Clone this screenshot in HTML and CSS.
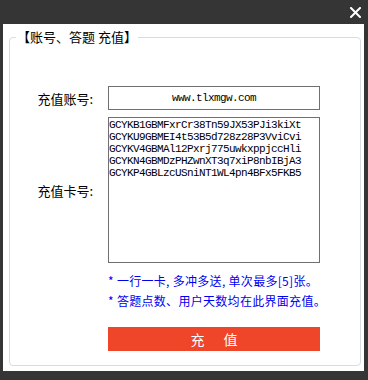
FILE: index.html
```html
<!DOCTYPE html>
<html lang="zh-CN">
<head>
    <meta charset="UTF-8">
    <meta name="viewport" content="width=device-width, initial-scale=1.0">
    <title>充值</title>
    <link rel="stylesheet" href="styles.css">
</head>
<body>

    <div class="titlebar">
        <svg class="close" width="11" height="11" viewBox="0 0 11 11">
            <path d="M1 1 L10 10 M10 1 L1 10" stroke="#fff" stroke-width="2" stroke-linecap="square"/>
        </svg>
    </div>

    <div class="panel">
        <fieldset class="group">
            <legend>【账号、答题 充值】</legend>

            <div class="form-grid">
                <label for="account">充值账号:</label>
                <input type="text" id="account" value="www.tlxmgw.com">

                <label for="cards">充值卡号:</label>
                <textarea id="cards">GCYKB1GBMFxrCr38Tn59JX53PJi3kiXt
GCYKU9GBMEI4t53B5d728z28P3VviCvi
GCYKV4GBMAl12Pxrj775uwkxppjccHli
GCYKN4GBMDzPHZwnXT3q7xiP8nbIBjA3
GCYKP4GBLzcUSniNT1WL4pn4BFx5FKB5</textarea>

                <div class="notes">
                    <p>* 一行一卡, 多冲多送, 单次最多[5]张。</p>
                    <p>* 答题点数、用户天数均在此界面充值。</p>
                </div>

                <button type="button" class="submit">充 值</button>
            </div>
        </fieldset>
    </div>

</body>
</html>
```

FILE: styles.css
```css
body {
    margin: 0;
    width: 368px;
    height: 380px;
    background-color: #353535;
    font-family: "Noto Sans CJK SC", "Noto Sans", sans-serif;
    color: #000;
    overflow: hidden;
}

.titlebar {
    height: 24px;
    display: flex;
    justify-content: flex-end;
    align-items: flex-start;
}

.close {
    margin-top: 7px;
    margin-right: 7px;
}

.panel {
    width: 352px;
    height: 342px;
    margin-left: 3px;
    padding: 5px 3px 0 6px;
    background-color: #fff;
    display: flex;
    flex-direction: column;
}

.group {
    flex: 1;
    margin: 0 0 5px 0;
    padding: 41px 0 0 0;
    border: 1px solid #d5dee6;
    border-radius: 4px;
    min-width: 0;
}

.group legend {
    margin-left: 6px;
    padding: 0 1px;
    font-size: 13px;
    line-height: 16px;
}

.form-grid {
    display: grid;
    grid-template-columns: 87px 212px;
    column-gap: 11px;
    align-items: center;
}

.form-grid label {
    text-align: right;
    font-size: 13px;
    padding-right: 4px;
}

.form-grid input,
.form-grid textarea {
    box-sizing: border-box;
    width: 212px;
    margin: 0;
    border: 1px solid #707070;
    font-family: "Liberation Mono", monospace;
    font-size: 11px;
    letter-spacing: -0.6px;
    color: #000;
    outline: none;
}

.form-grid input {
    height: 24px;
    padding: 0;
    text-align: center;
}

.form-grid textarea {
    height: 146px;
    margin-top: 7px;
    padding: 1px 0 0 0;
    line-height: 12px;
    resize: none;
    overflow: hidden;
}

.form-grid label[for="cards"] {
    margin-top: 7px;
}

.notes {
    grid-column: 2;
    margin-top: 8px;
    color: #0000f0;
    font-size: 12px;
    line-height: 20px;
    letter-spacing: 0.3px;
    white-space: nowrap;
}

.notes p {
    margin: 0;
}

.submit {
    grid-column: 2;
    margin-top: 16px;
    height: 24px;
    border: none;
    background-color: #ef4629;
    color: #fff;
    font-family: "Noto Sans CJK SC", sans-serif;
    font-size: 14px;
    letter-spacing: 8px;
    padding: 0 0 0 8px;
}
```
